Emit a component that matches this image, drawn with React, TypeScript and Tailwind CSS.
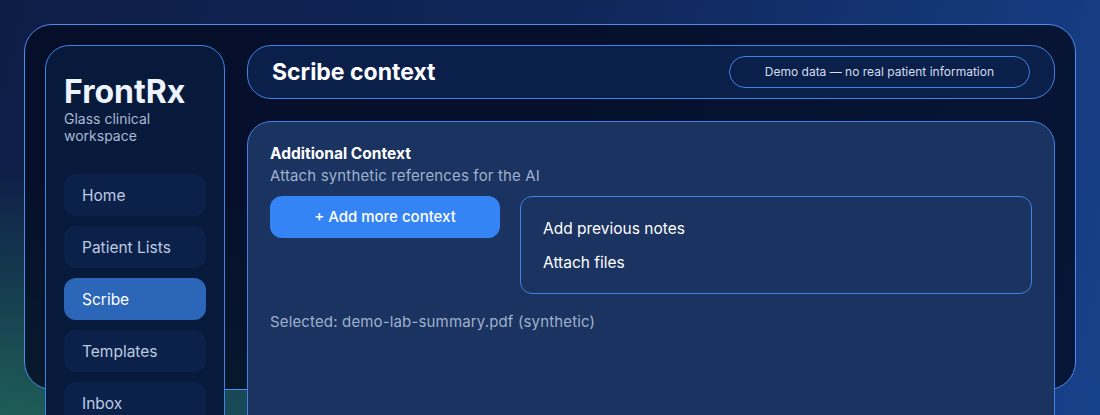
import React from 'react';

const navItems = ['Home', 'Patient Lists', 'Scribe', 'Templates', 'Inbox'];

const Sidebar = () => {
  return (
    <aside className="w-[180px] shrink-0 rounded-3xl border border-[#3f83e6] bg-[#071a3b] px-[18px] pt-[28px] pb-5">
      <h1 className="text-[32px] leading-[36px] font-bold text-[#eef4ff]">FrontRx</h1>
      <p className="text-sm leading-[17px] text-[#a9b8d4]">Glass clinical workspace</p>
      <nav className="mt-[30px] flex flex-col gap-[10px]">
        {navItems.map((item) => (
          <div
            key={item}
            className={
              item === 'Scribe'
                ? 'h-[42px] rounded-xl bg-[#2c66b8] pl-[18px] pt-px flex items-center text-[15.5px] text-white'
                : 'h-[42px] rounded-xl bg-[#0c2149] pl-[18px] pt-px flex items-center text-[15.5px] text-[#bccae2]'
            }
          >
            {item}
          </div>
        ))}
      </nav>
    </aside>
  );
};

export default function App() {
  return (
    <div
      className="h-screen overflow-hidden p-6 bg-[radial-gradient(ellipse_at_0%_100%,rgba(32,100,88,0.9)_0%,rgba(32,100,88,0)_42%),linear-gradient(105deg,#0e1d46_0%,#10275b_50%,#17418a_100%)]"
      style={{ fontFamily: 'Inter, "Noto Sans", sans-serif' }}
    >
      <div className="h-[366px] rounded-[28px] border border-[#4a8ef0] bg-[#040b22]/80 p-5 flex items-start gap-[22px]">
        <Sidebar />

        <main className="flex-1 flex flex-col gap-[22px]">
          {/* page header */}
          <header className="h-[54px] rounded-3xl border border-[#3f83e6] bg-[#0b1f4b] px-6 flex items-center justify-between">
            <h2 className="text-[23px] font-bold text-white">Scribe context</h2>
            <span className="h-8 rounded-full border border-[#3f83e6] px-[35px] flex items-center text-xs text-[#d3ddf0]">
              Demo data — no real patient information
            </span>
          </header>

          {/* context card */}
          <section className="h-[320px] rounded-3xl border border-[#3f83e6] bg-[#1a3360] px-[22px] pt-[22px]">
            <h3 className="text-[15.5px] leading-5 font-bold text-white">Additional Context</h3>
            <p className="mt-0.5 text-[15px] leading-5 tracking-[0.01em] text-[#9fb0cd]">Attach synthetic references for the AI</p>

            <div className="mt-[10px] flex items-start gap-5">
              <button className="w-[230px] h-[42px] rounded-xl bg-[#3584f6] text-[15px] font-medium text-white">
                + Add more context
              </button>
              <div className="flex-1 rounded-xl border border-[#3f83e6] px-[22px] pt-[15px] pb-[13px]">
                <div className="h-[34px] flex items-center text-[15.5px] text-white">Add previous notes</div>
                <div className="h-[34px] flex items-center text-[15.5px] text-white">Attach files</div>
              </div>
            </div>

            <p className="mt-[18px] text-[15px] leading-5 tracking-[0.01em] text-[#9fb0cd]">Selected: demo-lab-summary.pdf (synthetic)</p>
          </section>
        </main>
      </div>
    </div>
  );
}
